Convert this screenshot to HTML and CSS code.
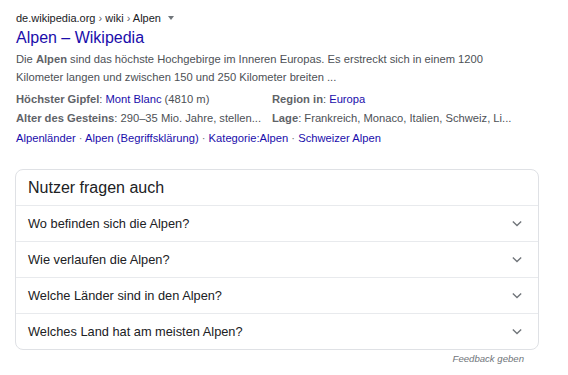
FILE: index.html
```html
<!DOCTYPE html>
<html lang="de">
<head>
<meta charset="utf-8">
<link rel="stylesheet" href="styles.css">
</head>
<body>
<div class="result">
  <div class="crumb">de.wikipedia.org <span class="sep">›</span> wiki <span class="sep">›</span> Alpen <span class="caret"></span></div>
  <a class="title">Alpen – Wikipedia</a>
  <div class="snippet">Die <b>Alpen</b> sind das höchste Hochgebirge im Inneren Europas. Es erstreckt sich in einem 1200 Kilometer langen und zwischen 150 und 250 Kilometer breiten ...</div>
  <div class="facts">
    <div class="fact"><b>Höchster Gipfel</b>: <a>Mont Blanc</a> (4810 m)</div>
    <div class="fact"><b>Region in</b>: <a>Europa</a></div>
    <div class="fact"><b>Alter des Gesteins</b>: 290–35 Mio. Jahre, stellen...</div>
    <div class="fact"><b>Lage</b>: Frankreich, Monaco, Italien, Schweiz, Li...</div>
  </div>
  <div class="links"><a>Alpenländer</a> · <a>Alpen (Begriffsklärung)</a> · <a>Kategorie:Alpen</a> · <a>Schweizer Alpen</a></div>
</div>
<div class="paa">
  <div class="paa-head">Nutzer fragen auch</div>
  <div class="q"><span>Wo befinden sich die Alpen?</span><svg class="chev" viewBox="0 0 12 8" width="12" height="8"><path d="M1 1.5 L6 6.5 L11 1.5" fill="none" stroke="#70757a" stroke-width="1.6"/></svg></div>
  <div class="q"><span>Wie verlaufen die Alpen?</span><svg class="chev" viewBox="0 0 12 8" width="12" height="8"><path d="M1 1.5 L6 6.5 L11 1.5" fill="none" stroke="#70757a" stroke-width="1.6"/></svg></div>
  <div class="q"><span>Welche Länder sind in den Alpen?</span><svg class="chev" viewBox="0 0 12 8" width="12" height="8"><path d="M1 1.5 L6 6.5 L11 1.5" fill="none" stroke="#70757a" stroke-width="1.6"/></svg></div>
  <div class="q"><span>Welches Land hat am meisten Alpen?</span><svg class="chev" viewBox="0 0 12 8" width="12" height="8"><path d="M1 1.5 L6 6.5 L11 1.5" fill="none" stroke="#70757a" stroke-width="1.6"/></svg></div>
</div>
<div class="feedback">Feedback geben</div>
</body>
</html>
```
FILE: styles.css
```css
body {
  margin: 0;
  padding: 3px 16px 0 16px;
  font-family: Arial, "Liberation Sans", sans-serif;
  background: #fff;
  width: 522px;
}
a { color: #1a0dab; text-decoration: none; }
.crumb {
  font-size: 11px;
  line-height: 18px;
  color: #202124;
  padding-top: 6px;
}
.crumb .sep { color: #5f6368; }
.caret {
  display: inline-block;
  width: 0; height: 0;
  border-left: 3.5px solid transparent;
  border-right: 3.5px solid transparent;
  border-top: 4px solid #70757a;
  margin-left: 4px;
  vertical-align: middle;
  position: relative;
  top: -1px;
}
.title {
  display: block;
  font-size: 16px;
  line-height: 22px;
  margin-top: 0;
}
.snippet {
  font-size: 11.2px;
  line-height: 18px;
  color: #4d5156;
  margin-top: 1px;
  width: 490px;
}
.snippet b { color: #5f6368; }
.facts {
  display: grid;
  grid-template-columns: 256px 1fr;
  font-size: 11.2px;
  line-height: 19px;
  color: #4d5156;
  margin-top: 4px;
}
.fact b { color: #5f6368; }
.links {
  font-size: 11.2px;
  line-height: 19px;
  color: #70757a;
  margin-top: 1px;
}
.paa {
  margin-top: 21px;
  margin-left: -1px;
  border: 1px solid #dfe1e5;
  border-radius: 8px;
  width: 522px;
}
.paa-head {
  font-size: 16px;
  color: #202124;
  height: 35px;
  line-height: 35px;
  padding-left: 12px;
}
.q {
  display: flex;
  align-items: center;
  justify-content: space-between;
  border-top: 1px solid #e8eaed;
  height: 35px;
  padding: 0 16px 0 12px;
  font-size: 12.8px;
  color: #202124;
}
.chev { width: 10px; height: 7px; margin-right: 0; }
.feedback {
  text-align: right;
  font-size: 9.6px;
  font-style: italic;
  color: #70757a;
  padding: 3px 14px 0 0;
}
```
